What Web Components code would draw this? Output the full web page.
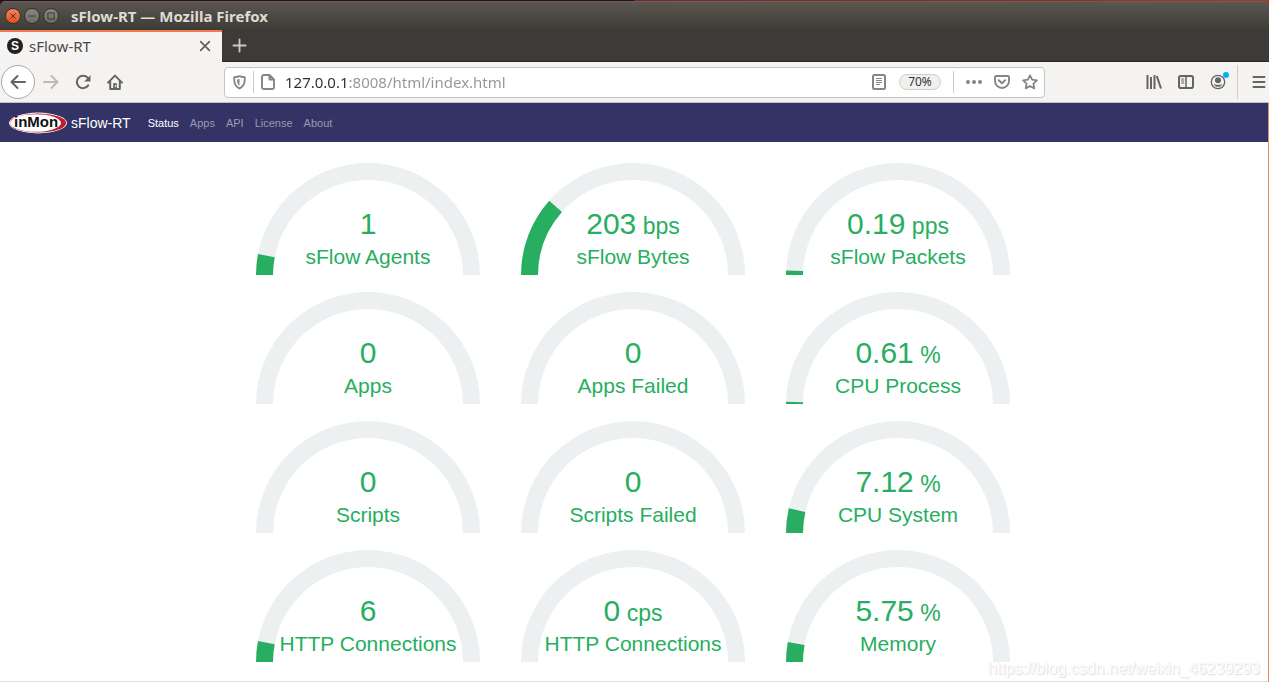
<!DOCTYPE html>
<html lang="en">
<head>
<meta charset="utf-8">
<title>sFlow-RT</title>
<style>
  html, body { margin: 0; background: #fff; }
  body { font-family: "Noto Sans", "Open Sans", sans-serif; min-height: 100vh; }
</style>
</head>
<body>
<browser-window>
  <window-titlebar slot="title">sFlow-RT — Mozilla Firefox</window-titlebar>
  <tab-strip slot="tabs">sFlow-RT</tab-strip>
  <nav-toolbar slot="toolbar" url="127.0.0.1:8008/html/index.html" zoom="70%"></nav-toolbar>
  <sflow-page></sflow-page>
</browser-window>

<script>
const define = (name, html) => customElements.define(name, class extends HTMLElement {
  constructor() {
    super();
    this.attachShadow({ mode: 'open' }).innerHTML = html;
  }
});

/* Icons, all on a 16 by 16 grid */
const ICONS = {
  close: '<path d="M5 5l6 6M11 5l-6 6"/>',
  minimize: '<path d="M4 8h8"/>',
  maximize: '<rect x="4.500" y="4.500" width="7" height="7"/>',
  tabclose: '<path d="M3 3l10 10M13 3L3 13" stroke-width="1.8" stroke-linecap="round"/>',
  plus: '<path d="M8 1.500v13M1.500 8h13" stroke-width="2" stroke-linecap="round"/>',
  back: '<path d="M15 8H1.500M7.500 2L1.500 8l6 6" stroke-width="2" stroke-linecap="round" stroke-linejoin="round"/>',
  forward: '<path d="M1 8h13.500M8.500 2l6 6-6 6" stroke-width="2" stroke-linecap="round" stroke-linejoin="round"/>',
  reload: '<path d="M13.200 11.400A6.200 6.200 0 1 1 13 4.200" stroke-width="2" stroke-linecap="round"/><path d="M15.500 1.200v6.300H9.200z" fill="currentColor" stroke="none"/>',
  home: '<path d="M1 8.600L8 1.600l7 7M3.200 7.500V15h9.600V7.500" stroke-width="2" stroke-linecap="round" stroke-linejoin="round"/><path d="M6.200 15V9.200h3.600V15z" fill="currentColor" stroke="none"/><path d="M8.400 11v2" stroke="#f3f2f1"/>',
  shield: '<path d="M8 1.200c2 .9 4.400 1 5.700 1.100 0 6.100-.7 9.700-5.700 12.200C3 12 2.300 8.400 2.300 2.300 3.600 2.200 6 2.100 8 1.200z" stroke-width="1.900" stroke-linejoin="round"/><path d="M8 4.300v7.300C6 10 5.400 8 5.300 4.900z" fill="currentColor" stroke="none"/>',
  page: '<path d="M9.500 1H3.800A1.800 1.800 0 0 0 2 2.800v10.400A1.800 1.800 0 0 0 3.800 15h8.400a1.800 1.800 0 0 0 1.800-1.800V5.500zM9.500 1v4.500H14" stroke-width="1.900" stroke-linejoin="round"/>',
  reader: '<rect x="2" y="1" width="12" height="14" rx="1.500" stroke-width="2"/><path d="M5 4.500h6M5 6.500h6M5 8.500h6M5 10.500h4"/>',
  dots: '<g fill="currentColor" stroke="none"><circle cx="2" cy="8" r="2"/><circle cx="8" cy="8" r="2"/><circle cx="14" cy="8" r="2"/></g>',
  pocket: '<path d="M2.300 2h11.400c.7 0 1.300.5 1.300 1.200V7A7 7 0 0 1 1 7V3.200C1 2.500 1.600 2 2.300 2z" stroke-width="1.900"/><path d="M4.800 6.200L8 9.200l3.200-3" stroke-width="2" stroke-linecap="round" stroke-linejoin="round"/>',
  star: '<path d="M8 1.300l2.100 4.400 4.800.6-3.500 3.300.9 4.800L8 12.100l-4.300 2.300.9-4.800L1.100 6.300l4.800-.6z" stroke-width="1.800" stroke-linejoin="round"/>',
  library: '<path d="M1.500 1v14M5 3v12M8.500 1v14M10.800 2l4.200 12.500" stroke-width="2"/>',
  sidebar: '<rect x="1" y="2" width="14" height="12" rx="1.800" stroke-width="2"/><path d="M8 2v12" stroke-width="1.500"/><path d="M3.200 5h3M3.200 7h3M3.200 9h3"/>',
  account: '<circle cx="8" cy="8" r="6.700" stroke-width="1.300"/><g fill="currentColor" stroke="none"><circle cx="8" cy="6.200" r="3"/><path d="M3.500 9.700c2 1.600 7 1.600 9 0A4.800 4.800 0 0 1 3.500 9.700z"/></g>',
  menu: '<path d="M2.500 3h11M2.500 8h11M2.500 13h11" stroke-width="2" stroke-linecap="round"/>'
};
customElements.define('ui-icon', class extends HTMLElement {
  constructor() {
    super();
    this.attachShadow({ mode: 'open' });
  }
  connectedCallback() {
    this.shadowRoot.innerHTML = `<style>
      :host { display: block; width: 16px; height: 16px; }
      svg { display: block; width: 100%; height: 100%; overflow: visible; }
    </style><svg viewBox="0 0 16 16" fill="none" stroke="currentColor" aria-hidden="true">${ICONS[this.getAttribute('name')]}</svg>`;
  }
});

define('browser-window', `<style>
  :host { display: block; }
</style>
<slot name="title"></slot><slot name="tabs"></slot><slot name="toolbar"></slot><slot></slot>`);

define('window-titlebar', `<style>
  :host { display: block; background: linear-gradient(90deg, #2a0c20 50%, #7d2334 50%, #8e2a28 80%, #a23c20); padding-top: 1px; }
  header { display: flex; align-items: center; height: 29px; gap: 3px; padding-left: 5px;
    background: linear-gradient(#66625a 0 1px, #5b574f 1px, #3d3b37); border-radius: 5px 5px 0 0; }
  button { box-sizing: border-box; width: 16px; height: 16px; padding: 0; border: 1px solid #33312d; border-radius: 50%;
    display: grid; place-items: center; color: #33312d; background: linear-gradient(#8a877e, #6d6a62); }
  button ui-icon { width: 14px; height: 14px; }
  button.close { background: linear-gradient(#f58460, #e2501f); color: #50200f; }
  h1 { margin: 0 0 0 9px; font-size: 15px; line-height: 20px; font-weight: 700; color: #dfdbd2; }
</style>
<header>
  <button class="close" aria-label="Close window"><ui-icon name="close"></ui-icon></button>
  <button aria-label="Minimize"><ui-icon name="minimize"></ui-icon></button>
  <button aria-label="Maximize"><ui-icon name="maximize"></ui-icon></button>
  <h1><slot></slot></h1>
</header>`);

define('tab-strip', `<style>
  :host { display: flex; height: 32px; box-sizing: border-box; background: #3c3b37; box-shadow: inset 0 -1px #282724; }
  .tab { box-sizing: border-box; width: 222px; display: flex; align-items: center; padding: 0 10px 2px 7px;
    background: #f5f4f3; border-top: 2px solid #f0794c; color: #4a4a4a; }
  .fav { width: 16px; height: 16px; margin-right: 6px; border-radius: 50%; background: #222; color: #fff;
    font: 700 12px/16px "Liberation Sans", sans-serif; text-align: center; }
  .label { flex: 1; font-size: 15px; line-height: 20px; }
  button { border: 0; padding: 0; background: none; color: #5c5b59; display: grid; place-items: center; }
  .tab ui-icon { width: 14px; height: 14px; }
  .new { width: 34px; padding-bottom: 2px; color: #c9c7c2; }
  .new ui-icon { width: 15px; height: 15px; }
</style>
<div class="tab">
  <span class="fav" aria-hidden="true">S</span>
  <span class="label"><slot></slot></span>
  <button aria-label="Close tab"><ui-icon name="tabclose"></ui-icon></button>
</div>
<button class="new" aria-label="New tab"><ui-icon name="plus"></ui-icon></button>`);

customElements.define('nav-toolbar', class extends HTMLElement {
  constructor() {
    super();
    this.attachShadow({ mode: 'open' }).innerHTML = `<style>
  :host { display: flex; box-sizing: border-box; height: 41px; align-items: center; padding-left: 1px;
    background: #f4f3f2; border-bottom: 1px solid #c4c2be; color: #646461; }
  button { flex: none; box-sizing: border-box; width: 32px; height: 32px; padding: 0; border: 0; background: none; color: inherit;
    display: grid; place-items: center; position: relative; }
  button:disabled { color: #bcbbb9; }
  .back { width: 34px; height: 34px; border: 1px solid #a9a8a5; border-radius: 50%; background: #fff; }
  .spring { flex: 0 1 93px; }
  .bar { flex: 1; box-sizing: border-box; height: 31px; display: flex; align-items: center; padding-left: 6px;
    background: #fff; border: 1px solid #c6c4c1; border-radius: 4px; color: #858583; }
  .bar button { width: 28px; height: 28px; }
  .bar button.shield { width: 16px; margin-right: 6px; }
  .bar button.shield ui-icon { width: 15px; height: 15px; }
  .bar button.more { margin-left: 6px; }
  .rule { flex: none; width: 1px; height: 22px; background: #cfcdca; }
  .tall { height: 34px; margin: 0 5px 0 3px; }
  input { flex: 1; min-width: 0; border: 0; padding: 0; margin-left: 3px; outline: 0; font: inherit; font-size: 15px; line-height: 20px; height: 20px;
    background: linear-gradient(90deg, #2d2d2d 64px, #949494 64px); -webkit-background-clip: text; background-clip: text; color: transparent; }
  .bar button.zoom { width: 42px; height: 16px; margin: 0 12px 0 6px; border: 1px solid #cfcdca; border-radius: 8px; background: #f1f0ef;
    color: #333; font: 12px/14px "Noto Sans", sans-serif; }
  .dot { position: absolute; right: 5px; top: 6px; width: 6px; height: 6px; border-radius: 50%; background: #00b3f4; }
  .menu { width: 26px; overflow: hidden; }
  .menu ui-icon { margin-left: 6px; }
</style>
<button class="back" aria-label="Back"><ui-icon name="back"></ui-icon></button>
<button disabled aria-label="Forward"><ui-icon name="forward"></ui-icon></button>
<button aria-label="Reload"><ui-icon name="reload"></ui-icon></button>
<button aria-label="Home"><ui-icon name="home"></ui-icon></button>
<span class="spring"></span>
<div class="bar">
  <button class="shield" aria-label="Tracking protection"><ui-icon name="shield"></ui-icon></button>
  <span class="rule"></span>
  <button aria-label="Site information"><ui-icon name="page"></ui-icon></button>
  <input type="text" aria-label="Address" spellcheck="false">
  <button aria-label="Reader view"><ui-icon name="reader"></ui-icon></button>
  <button class="zoom"></button>
  <span class="rule"></span>
  <button class="more" aria-label="Page actions"><ui-icon name="dots"></ui-icon></button>
  <button aria-label="Save to Pocket"><ui-icon name="pocket"></ui-icon></button>
  <button aria-label="Bookmark"><ui-icon name="star"></ui-icon></button>
</div>
<span class="spring"></span>
<button aria-label="Library"><ui-icon name="library"></ui-icon></button>
<button aria-label="Sidebars"><ui-icon name="sidebar"></ui-icon></button>
<button aria-label="Account"><ui-icon name="account"></ui-icon><span class="dot"></span></button>
<span class="rule tall"></span>
<button class="menu" aria-label="Menu"><ui-icon name="menu"></ui-icon></button>`;
  }
  connectedCallback() {
    this.shadowRoot.querySelector('input').value = this.getAttribute('url');
    this.shadowRoot.querySelector('.zoom').textContent = this.getAttribute('zoom');
  }
});

define('inmon-logo', `<style>
  :host { display: block; width: 60px; height: 22px; }
  svg { display: block; }
</style>
<svg width="60" height="22" viewBox="0 0 60 22" role="img" aria-label="inMon">
  <ellipse cx="30" cy="11" rx="29" ry="10.400" fill="#fff"/>
  <ellipse cx="30" cy="11" rx="28.200" ry="9.600" fill="#c01e2c"/>
  <ellipse cx="27.500" cy="11" rx="25.500" ry="8.800" fill="#fff"/>
  <text x="6" y="15" font-family="Liberation Sans, sans-serif" font-weight="700" font-size="15" fill="#111">inMon</text>
</svg>`);

define('site-nav', `<style>
  :host { display: flex; align-items: center; height: 39px; padding-left: 8px; background: #333366;
    font-family: "Liberation Sans", sans-serif; }
  a { color: #9999b2; text-decoration: none; font-size: 11px; line-height: 16px; }
  .brand { display: flex; align-items: center; gap: 3px; color: #fff; font-size: 14px; line-height: 20px; margin-right: 17px; }
  nav { display: flex; gap: 11px; }
  a[aria-current] { color: #fff; }
</style>
<a class="brand" href="#"><inmon-logo></inmon-logo><span>sFlow-RT</span></a>
<nav>
  <a href="#status" aria-current="page">Status</a><a href="#apps">Apps</a><a href="#api">API</a><a href="#license">License</a><a href="#about">About</a>
</nav>`);

/* Half-circle gauge: value, optional unit, and the filled fraction */
customElements.define('status-gauge', class extends HTMLElement {
  constructor() {
    super();
    this.attachShadow({ mode: 'open' });
  }
  connectedCallback() {
    const fill = Number(this.getAttribute('fill') || 0);
    const a = Math.PI * fill;
    const point = r => `${112 - r * Math.cos(a)} ${112 - r * Math.sin(a)}`;
    const unit = this.getAttribute('unit');
    this.shadowRoot.innerHTML = `<style>
      :host { display: grid; width: 224px; height: 112px; color: #27ae60; text-align: center; }
      svg, .text { grid-area: 1 / 1; }
      svg { display: block; }
      .text { align-self: end; display: flex; flex-direction: column; gap: 4px; padding-bottom: 6px; }
      .value { font-size: 30px; line-height: 34px; }
      .value small { font-size: 23px; line-height: 24px; }
      .label { font-size: 21px; line-height: 24px; white-space: nowrap; }
    </style>
    <svg width="224" height="112" viewBox="0 0 224 112" aria-hidden="true">
      <path fill="#ecf0f1" d="M0 112A112 112 0 0 1 224 112H207A95 95 0 0 0 17 112z"/>
      ${fill ? `<path fill="#27ae60" d="M0 112A112 112 0 0 1 ${point(112)}L${point(95)}A95 95 0 0 0 17 112z"/>` : ''}
    </svg>
    <div class="text">
      <div class="value">${this.getAttribute('value')}${unit ? `<small> ${unit}</small>` : ''}</div>
      <div class="label"><slot></slot></div>
    </div>`;
  }
});

define('sflow-page', `<style>
  :host { display: block; position: relative; border-right: 1px solid #f08a62; font-family: "Liberation Sans", sans-serif; }
  main { display: grid; grid-template-columns: repeat(3, 224px); gap: 17px 41px; justify-content: center;
    padding: 21px 2px 19px 0; border-bottom: 1px solid #dddddd; }
  .mark { position: absolute; right: 8px; bottom: 3px; font-size: 16px; line-height: 20px; color: #fff;
    text-shadow: 1px 1px 1px #ddd, 0 0 1px #e4e4e4; }
</style>
<site-nav></site-nav>
<main>
  <status-gauge value="1" fill="0.06">sFlow Agents</status-gauge>
  <status-gauge value="203" unit="bps" fill="0.231">sFlow Bytes</status-gauge>
  <status-gauge value="0.19" unit="pps" fill="0.013">sFlow Packets</status-gauge>
  <status-gauge value="0">Apps</status-gauge>
  <status-gauge value="0">Apps Failed</status-gauge>
  <status-gauge value="0.61" unit="%" fill="0.0061">CPU Process</status-gauge>
  <status-gauge value="0">Scripts</status-gauge>
  <status-gauge value="0">Scripts Failed</status-gauge>
  <status-gauge value="7.12" unit="%" fill="0.0712">CPU System</status-gauge>
  <status-gauge value="6" fill="0.06">HTTP Connections</status-gauge>
  <status-gauge value="0" unit="cps">HTTP Connections</status-gauge>
  <status-gauge value="5.75" unit="%" fill="0.0575">Memory</status-gauge>
</main>
<span class="mark">https://blog.csdn.net/weixin_46239293</span>`);
</script>
</body>
</html>
